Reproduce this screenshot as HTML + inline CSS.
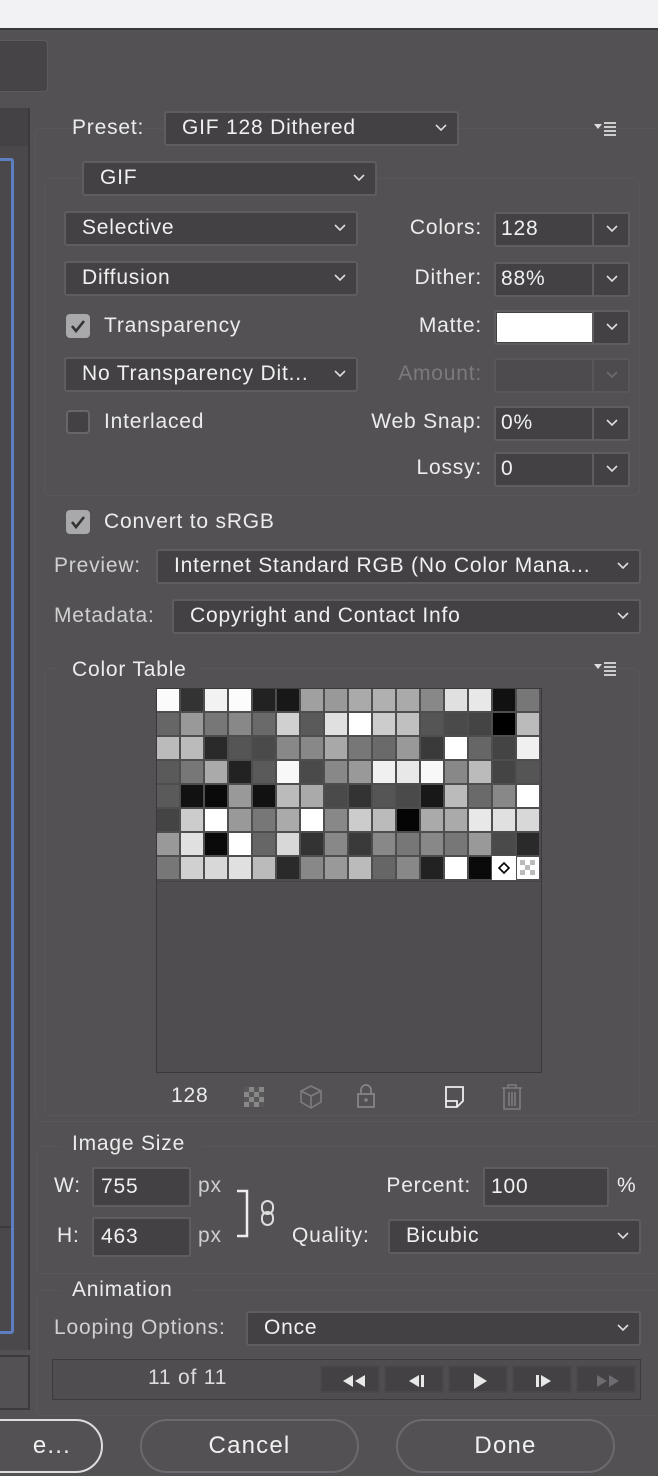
<!DOCTYPE html>
<html><head><meta charset="utf-8"><style>
*{box-sizing:border-box;margin:0;padding:0}
body{width:658px;height:1476px;background:#535154;position:relative;overflow:hidden;font-family:"Liberation Sans",sans-serif;font-size:21px;letter-spacing:0.8px;color:#ececec}
.a{position:absolute}
.lbl{position:absolute;line-height:24px;white-space:nowrap}
.r{text-align:right}
.dd{position:absolute;background:#434144;border:2px solid #5f5d61;border-radius:3px;line-height:30px;padding-left:16px;white-space:nowrap;color:#f0f0f0}
.dd svg,.fld svg{position:absolute;right:10px;top:11px}
.fld{position:absolute;background:#434144;border:2px solid #5f5d61;border-radius:2px;line-height:30px;padding-left:5px;color:#f0f0f0}
.fld .sp{position:absolute;right:34px;top:0;bottom:0;width:2px;background:#5f5d61}
.cb{position:absolute;width:24px;height:24px;border-radius:4px;background:#a9a8ab}
.cb.off{background:#434144;border:2px solid #68666a}
.grp{position:absolute;border:1px solid #58565a;border-radius:6px}
.grid{position:absolute;left:157px;top:689px;display:grid;grid-template-columns:repeat(16,22px);grid-auto-rows:22px;gap:2px}
.btn{position:absolute;border:2px solid #6c6a6e;border-radius:27px;text-align:center;line-height:50px;font-size:24px;letter-spacing:1.2px;color:#f0f0f0}
.pb{position:absolute;top:1365px;width:60px;height:28px;border:2px solid #4a484c;background:#434144;border-radius:2px}
.pb svg{position:absolute;left:17px;top:6px}
</style></head><body>
<div class="a" style="left:0;top:0;width:658px;height:28px;background:#f2f1f4"></div>
<div class="a" style="left:0;top:28px;width:658px;height:2px;background:#3a383b"></div>
<div class="a" style="left:-10px;top:40px;width:58px;height:52px;background:#464447;border:1px solid #5d5b5f;border-radius:4px"></div>
<div class="a" style="left:0;top:108px;width:30px;height:1242px;background:#4a484b;border-right:2px solid #3c3a3d"></div>
<div class="a" style="left:0;top:108px;width:28px;height:38px;background:#444245"></div>
<div class="a" style="left:-4px;top:158px;width:18px;height:1176px;border:3px solid #5b7fc0;border-radius:3px"></div>
<div class="a" style="left:0;top:1226px;width:11px;height:2px;background:#3c3a3d"></div>
<div class="a" style="left:0;top:1355px;width:30px;height:55px;border:2px solid #3c3a3d;border-left:none"></div>

<div class="grp" style="left:35px;top:128px;width:627px;height:994px"></div>
<div class="grp" style="left:44px;top:178px;width:596px;height:318px"></div>
<div class="grp" style="left:44px;top:668px;width:596px;height:448px"></div>
<div class="grp" style="left:36px;top:1146px;width:630px;height:128px"></div>
<div class="grp" style="left:36px;top:1290px;width:630px;height:126px"></div>

<div class="lbl" style="left:72px;top:116px">Preset:</div>
<div class="dd" style="left:164px;top:111px;width:295px;height:35px">GIF 128 Dithered<svg width="12" height="8"><path d="M1 1l5 5 5-5" stroke="#ddd" stroke-width="1.6" fill="none"/></svg></div>
<svg class="a" style="left:594px;top:121px" width="30" height="16"><path d="M0 3h8l-4 5z" fill="#ddd"/><path d="M10 2h12M10 6h12M10 10h12M10 14h12" stroke="#ddd" stroke-width="1.8"/></svg>

<div class="dd" style="left:82px;top:161px;width:295px;height:35px">GIF<svg width="12" height="8"><path d="M1 1l5 5 5-5" stroke="#ddd" stroke-width="1.6" fill="none"/></svg></div>

<div class="dd" style="left:64px;top:211px;width:294px;height:35px">Selective<svg width="12" height="8"><path d="M1 1l5 5 5-5" stroke="#ddd" stroke-width="1.6" fill="none"/></svg></div>
<div class="lbl r" style="left:370px;top:216px;width:112px">Colors:</div>
<div class="fld" style="left:494px;top:212px;width:136px;height:35px">128<span class="sp"></span><svg width="12" height="8"><path d="M1 1l5 5 5-5" stroke="#ddd" stroke-width="1.6" fill="none"/></svg></div>

<div class="dd" style="left:64px;top:261px;width:294px;height:35px">Diffusion<svg width="12" height="8"><path d="M1 1l5 5 5-5" stroke="#ddd" stroke-width="1.6" fill="none"/></svg></div>
<div class="lbl r" style="left:370px;top:266px;width:112px">Dither:</div>
<div class="fld" style="left:494px;top:262px;width:136px;height:35px">88%<span class="sp"></span><svg width="12" height="8"><path d="M1 1l5 5 5-5" stroke="#ddd" stroke-width="1.6" fill="none"/></svg></div>

<div class="cb" style="left:66px;top:314px"><svg width="24" height="24"><path d="M6 12l4 5 8-10" stroke="#333" stroke-width="2.6" fill="none"/></svg></div>
<div class="lbl" style="left:104px;top:314px">Transparency</div>
<div class="lbl r" style="left:370px;top:314px;width:112px">Matte:</div>
<div class="fld" style="left:494px;top:310px;width:136px;height:35px;padding:0"><div class="a" style="left:1px;top:1px;width:96px;height:29px;background:#fff"></div><span class="sp"></span><svg width="12" height="8"><path d="M1 1l5 5 5-5" stroke="#ddd" stroke-width="1.6" fill="none"/></svg></div>

<div class="dd" style="left:64px;top:357px;width:294px;height:35px">No Transparency Dit...<svg width="12" height="8"><path d="M1 1l5 5 5-5" stroke="#ddd" stroke-width="1.6" fill="none"/></svg></div>
<div class="lbl r" style="left:360px;top:362px;width:122px;color:#7c7a7e">Amount:</div>
<div class="fld" style="left:494px;top:358px;width:136px;height:35px;background:#4d4b4e;border-color:#59575b"><span class="sp" style="background:#59575b"></span><svg width="12" height="8"><path d="M1 1l5 5 5-5" stroke="#6e6c70" stroke-width="1.6" fill="none"/></svg></div>

<div class="cb off" style="left:66px;top:410px"></div>
<div class="lbl" style="left:104px;top:410px">Interlaced</div>
<div class="lbl r" style="left:330px;top:410px;width:152px">Web Snap:</div>
<div class="fld" style="left:494px;top:406px;width:136px;height:35px">0%<span class="sp"></span><svg width="12" height="8"><path d="M1 1l5 5 5-5" stroke="#ddd" stroke-width="1.6" fill="none"/></svg></div>

<div class="lbl r" style="left:370px;top:456px;width:112px">Lossy:</div>
<div class="fld" style="left:494px;top:452px;width:136px;height:35px">0<span class="sp"></span><svg width="12" height="8"><path d="M1 1l5 5 5-5" stroke="#ddd" stroke-width="1.6" fill="none"/></svg></div>

<div class="cb" style="left:66px;top:510px"><svg width="24" height="24"><path d="M6 12l4 5 8-10" stroke="#333" stroke-width="2.6" fill="none"/></svg></div>
<div class="lbl" style="left:104px;top:510px">Convert to sRGB</div>

<div class="lbl" style="left:54px;top:554px;color:#d0d0d0">Preview:</div>
<div class="dd" style="left:156px;top:549px;width:485px;height:35px">Internet Standard RGB (No Color Mana...<svg width="12" height="8"><path d="M1 1l5 5 5-5" stroke="#ddd" stroke-width="1.6" fill="none"/></svg></div>
<div class="lbl" style="left:54px;top:604px;color:#d0d0d0">Metadata:</div>
<div class="dd" style="left:172px;top:599px;width:469px;height:35px">Copyright and Contact Info<svg width="12" height="8"><path d="M1 1l5 5 5-5" stroke="#ddd" stroke-width="1.6" fill="none"/></svg></div>

<div class="a" style="left:60px;top:656px;width:140px;height:30px;background:#535154"></div>
<div class="lbl" style="left:72px;top:658px">Color Table</div>
<svg class="a" style="left:594px;top:661px" width="30" height="16"><path d="M0 3h8l-4 5z" fill="#ddd"/><path d="M10 2h12M10 6h12M10 10h12M10 14h12" stroke="#ddd" stroke-width="1.8"/></svg>

<div class="a" style="left:156px;top:688px;width:386px;height:385px;background:#4f4d50;border:1px solid #3a383b"></div>
<div class="a" style="left:157px;top:881px;width:384px;height:1px;background:#444245"></div>
<div class="grid">
<div style="background:#fbfbfb"></div><div style="background:#333"></div><div style="background:#f2f2f2"></div><div style="background:#fcfcfc"></div><div style="background:#222"></div><div style="background:#181818"></div><div style="background:#a0a0a0"></div><div style="background:#999"></div><div style="background:#aaa"></div><div style="background:#b0b0b0"></div><div style="background:#aaa"></div><div style="background:#888"></div><div style="background:#e0e0e0"></div><div style="background:#e8e8e8"></div><div style="background:#111"></div><div style="background:#777"></div>
<div style="background:#666"></div><div style="background:#999"></div><div style="background:#777"></div><div style="background:#888"></div><div style="background:#6a6a6a"></div><div style="background:#d0d0d0"></div><div style="background:#5a5a5a"></div><div style="background:#e0e0e0"></div><div style="background:#fff"></div><div style="background:#ccc"></div><div style="background:#c0c0c0"></div><div style="background:#555"></div><div style="background:#4a4a4a"></div><div style="background:#444"></div><div style="background:#000"></div><div style="background:#bbb"></div>
<div style="background:#bbb"></div><div style="background:#bbb"></div><div style="background:#2a2a2a"></div><div style="background:#555"></div><div style="background:#4a4a4a"></div><div style="background:#888"></div><div style="background:#888"></div><div style="background:#a8a8a8"></div><div style="background:#777"></div><div style="background:#6a6a6a"></div><div style="background:#999"></div><div style="background:#3a3a3a"></div><div style="background:#fff"></div><div style="background:#666"></div><div style="background:#444"></div><div style="background:#f0f0f0"></div>
<div style="background:#5a5a5a"></div><div style="background:#777"></div><div style="background:#aaa"></div><div style="background:#222"></div><div style="background:#5a5a5a"></div><div style="background:#f8f8f8"></div><div style="background:#4a4a4a"></div><div style="background:#888"></div><div style="background:#999"></div><div style="background:#f0f0f0"></div><div style="background:#e8e8e8"></div><div style="background:#f8f8f8"></div><div style="background:#888"></div><div style="background:#bbb"></div><div style="background:#444"></div><div style="background:#555"></div>
<div style="background:#5a5a5a"></div><div style="background:#111"></div><div style="background:#0a0a0a"></div><div style="background:#999"></div><div style="background:#111"></div><div style="background:#bbb"></div><div style="background:#aaa"></div><div style="background:#4a4a4a"></div><div style="background:#333"></div><div style="background:#555"></div><div style="background:#4a4a4a"></div><div style="background:#181818"></div><div style="background:#bbb"></div><div style="background:#6a6a6a"></div><div style="background:#888"></div><div style="background:#fff"></div>
<div style="background:#444"></div><div style="background:#ccc"></div><div style="background:#fff"></div><div style="background:#999"></div><div style="background:#777"></div><div style="background:#aaa"></div><div style="background:#fff"></div><div style="background:#888"></div><div style="background:#ccc"></div><div style="background:#bbb"></div><div style="background:#050505"></div><div style="background:#aaa"></div><div style="background:#aaa"></div><div style="background:#e8e8e8"></div><div style="background:#e0e0e0"></div><div style="background:#d8d8d8"></div>
<div style="background:#999"></div><div style="background:#e0e0e0"></div><div style="background:#0a0a0a"></div><div style="background:#fff"></div><div style="background:#666"></div><div style="background:#d8d8d8"></div><div style="background:#333"></div><div style="background:#888"></div><div style="background:#3a3a3a"></div><div style="background:#888"></div><div style="background:#777"></div><div style="background:#888"></div><div style="background:#777"></div><div style="background:#999"></div><div style="background:#4a4a4a"></div><div style="background:#2a2a2a"></div>
<div style="background:#777"></div><div style="background:#d0d0d0"></div><div style="background:#d8d8d8"></div><div style="background:#e0e0e0"></div><div style="background:#bbb"></div><div style="background:#2a2a2a"></div><div style="background:#888"></div><div style="background:#999"></div><div style="background:#bbb"></div><div style="background:#666"></div><div style="background:#888"></div><div style="background:#222"></div><div style="background:#fff"></div><div style="background:#0a0a0a"></div>
<div style="background:#fff;outline:1px solid #fff;position:relative"><svg width="22" height="22"><path d="M11 6l5 5-5 5-5-5z" stroke="#000" stroke-width="1.6" fill="none"/></svg></div>
<div style="background:#fff;position:relative"><svg width="22" height="22"><rect x="3" y="3" width="5" height="5" fill="#bbb"/><rect x="13" y="3" width="5" height="5" fill="#bbb"/><rect x="8" y="8" width="5" height="5" fill="#bbb"/><rect x="3" y="13" width="5" height="5" fill="#bbb"/><rect x="13" y="13" width="5" height="5" fill="#bbb"/></svg></div>
</div>

<div class="lbl" style="left:171px;top:1084px">128</div>
<svg class="a" style="left:243px;top:1086px" width="22" height="22"><rect x="1" y="1" width="20" height="20" fill="#888"/><rect x="1" y="1" width="5" height="5" fill="#5a585b"/><rect x="11" y="1" width="5" height="5" fill="#5a585b"/><rect x="6" y="6" width="5" height="5" fill="#5a585b"/><rect x="16" y="6" width="5" height="5" fill="#5a585b"/><rect x="1" y="11" width="5" height="5" fill="#5a585b"/><rect x="11" y="11" width="5" height="5" fill="#5a585b"/><rect x="6" y="16" width="5" height="5" fill="#5a585b"/><rect x="16" y="16" width="5" height="5" fill="#5a585b"/></svg>
<svg class="a" style="left:299px;top:1084px" width="24" height="26"><path d="M12 2l10 5v11l-10 6-10-6V7z M2 7l10 5 10-5 M12 12v12" stroke="#7e7c80" stroke-width="1.6" fill="none"/></svg>
<svg class="a" style="left:355px;top:1083px" width="22" height="26"><path d="M6 11V7a5 5 0 0110 0v4" stroke="#858387" stroke-width="1.8" fill="none"/><rect x="3" y="11" width="16" height="13" stroke="#858387" stroke-width="1.8" fill="none"/><circle cx="11" cy="17" r="1.8" fill="#858387"/></svg>
<svg class="a" style="left:444px;top:1085px" width="22" height="24"><path d="M2 2h17v14l-6 6H2z M2 16h11v6" stroke="#eee" stroke-width="1.8" fill="none"/></svg>
<svg class="a" style="left:500px;top:1083px" width="24" height="28"><path d="M2 5h20M8 5V2h8v3M4 5v21h16V5M9 9v14M12 9v14M15 9v14" stroke="#7e7c80" stroke-width="1.6" fill="none"/></svg>

<div class="a" style="left:60px;top:1134px;width:142px;height:24px;background:#535154"></div>
<div class="lbl" style="left:72px;top:1132px">Image Size</div>
<div class="lbl" style="left:54px;top:1174px">W:</div>
<div class="fld" style="left:92px;top:1167px;width:99px;height:40px;line-height:36px;padding-left:7px">755</div>
<div class="lbl" style="left:198px;top:1174px;color:#d0d0d0">px</div>
<div class="lbl" style="left:57px;top:1224px">H:</div>
<div class="fld" style="left:92px;top:1217px;width:99px;height:40px;line-height:36px;padding-left:7px">463</div>
<div class="lbl" style="left:198px;top:1224px;color:#d0d0d0">px</div>
<svg class="a" style="left:236px;top:1189px" width="14" height="50"><path d="M1 2h10v45H1" stroke="#eee" stroke-width="2.5" fill="none"/></svg>
<svg class="a" style="left:259px;top:1199px" width="18" height="30"><rect x="3" y="2" width="11" height="13" rx="5.5" stroke="#ddd" stroke-width="2" fill="none"/><rect x="3" y="13" width="11" height="13" rx="5.5" stroke="#ddd" stroke-width="2" fill="none"/></svg>
<div class="lbl r" style="left:350px;top:1174px;width:121px">Percent:</div>
<div class="fld" style="left:483px;top:1167px;width:126px;height:40px;line-height:36px;padding-left:6px">100</div>
<div class="lbl" style="left:617px;top:1174px">%</div>
<div class="lbl" style="left:292px;top:1224px">Quality:</div>
<div class="dd" style="left:388px;top:1219px;width:253px;height:35px">Bicubic<svg width="12" height="8"><path d="M1 1l5 5 5-5" stroke="#ddd" stroke-width="1.6" fill="none"/></svg></div>

<div class="a" style="left:60px;top:1278px;width:130px;height:24px;background:#535154"></div>
<div class="lbl" style="left:72px;top:1278px">Animation</div>
<div class="lbl" style="left:54px;top:1316px;color:#d0d0d0">Looping Options:</div>
<div class="dd" style="left:246px;top:1311px;width:395px;height:35px">Once<svg width="12" height="8"><path d="M1 1l5 5 5-5" stroke="#ddd" stroke-width="1.6" fill="none"/></svg></div>

<div class="a" style="left:52px;top:1359px;width:589px;height:41px;background:#4f4d50;border:1px solid #3c3a3d"></div>
<div class="lbl" style="left:148px;top:1366px;color:#ddd">11 of 11</div>
<div class="pb" style="left:320px"><svg width="28" height="16"><path d="M14 2v12L4 8zM26 2v12L16 8z" fill="#e8e8e8"/></svg></div>
<div class="pb" style="left:384px"><svg width="28" height="16"><path d="M16 2v12L6 8z" fill="#e8e8e8"/><rect x="18" y="2" width="3" height="12" fill="#e8e8e8"/></svg></div>
<div class="pb" style="left:448px"><svg width="28" height="16"><path d="M7 0v16l13-8z" fill="#e8e8e8"/></svg></div>
<div class="pb" style="left:512px"><svg width="28" height="16"><rect x="5" y="2" width="3" height="12" fill="#e8e8e8"/><path d="M10 2v12l10-6z" fill="#e8e8e8"/></svg></div>
<div class="pb" style="left:576px"><svg width="28" height="16"><path d="M2 2v12l10-6zM14 2v12l10-6z" fill="#6e6c70"/></svg></div>

<div class="btn" style="left:-40px;top:1419px;width:143px;height:54px;border-color:#ddd;text-align:right;padding-right:30px">e...</div>
<div class="btn" style="left:140px;top:1419px;width:219px;height:54px">Cancel</div>
<div class="btn" style="left:396px;top:1419px;width:219px;height:54px">Done</div>
</body></html>
